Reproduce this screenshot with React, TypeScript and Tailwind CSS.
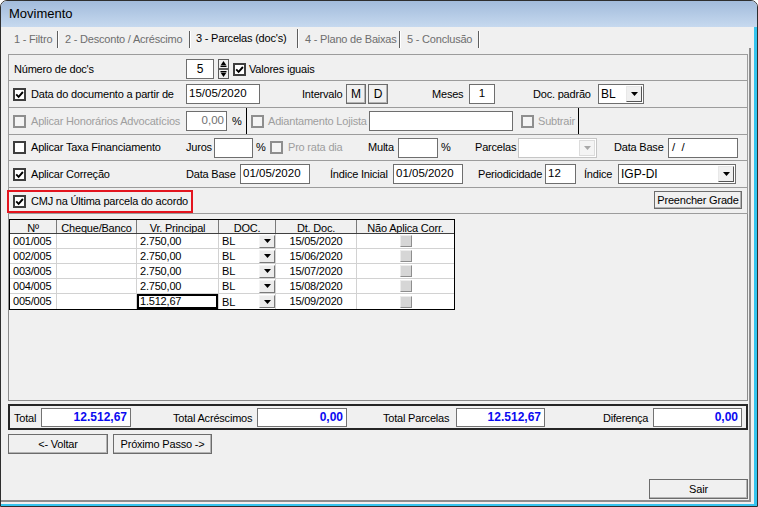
import React from 'react';

type Cls = { className?: string; children?: React.ReactNode };

const Check = ({ checked = false, disabled = false }: { checked?: boolean; disabled?: boolean }) => (
  <span
    className={`w-[13px] h-[13px] shrink-0 border-2 flex items-center justify-center ${
      disabled ? 'border-[#8e8e8e] bg-[#f4f4f4]' : 'border-[#3e3e3e] bg-white'
    }`}
  >
    {checked && (
      <svg width="9" height="9" viewBox="0 0 9 9">
        <path d="M1.2 4.4 L3.6 6.8 L7.9 2" fill="none" stroke="#000" strokeWidth="1.9" />
      </svg>
    )}
  </span>
);

const Field = ({ className = '', children }: Cls) => (
  <div
    className={`h-[20px] shrink-0 bg-white border border-[#6e6e6e] flex items-center text-[11.5px] tracking-normal leading-none whitespace-pre ${className}`}
  >
    {children}
  </div>
);

const Btn = ({ className = '', children }: Cls) => (
  <div
    className={`shrink-0 flex items-center justify-center bg-[#f0f0f0] border border-[#6c6c6c] shadow-[inset_-1px_-1px_0_#b4b4b4] ${className}`}
  >
    {children}
  </div>
);

const Arrow = ({ color = '#000' }: { color?: string }) => (
  <svg width="7" height="4" viewBox="0 0 7 4">
    <path d="M0 0H7L3.5 4Z" fill={color} />
  </svg>
);

const Combo = ({ className = '', value = '', disabled = false }: { className?: string; value?: string; disabled?: boolean }) => (
  <div
    className={`h-[20px] shrink-0 flex items-center bg-white border pl-[2px] pr-[1px] ${
      disabled ? 'border-[#c6c6c6]' : 'border-[#6e6e6e]'
    } ${className}`}
  >
    <span className="flex-1 text-[12px] tracking-normal">{value}</span>
    <span
      className={`w-[16px] h-[16px] flex items-center justify-center border ${
        disabled
          ? 'bg-[#f4f4f4] border-[#dcdcdc]'
          : 'bg-[#f0f0f0] border-[#e8e8e8] border-r-[#555] border-b-[#555]'
      }`}
    >
      <Arrow color={disabled ? '#a8a8a8' : '#000'} />
    </span>
  </div>
);

const Spinner = ({ className = '' }: { className?: string }) => (
  <svg className={`shrink-0 ${className}`} width="11" height="20" viewBox="0 0 11 20">
    <rect x="0.5" y="0.5" width="10" height="9" fill="#f0f0f0" stroke="#5c5c5c" />
    <rect x="0.5" y="10.5" width="10" height="9" fill="#f0f0f0" stroke="#5c5c5c" />
    <path d="M2.5 6.5 L5.5 2 L8.5 6.5Z" fill="#000" />
    <path d="M2.5 7.5 H8.5" stroke="#000" />
    <path d="M2.5 13.5 L5.5 18 L8.5 13.5Z" fill="#000" />
    <path d="M2.5 12.5 H8.5" stroke="#000" />
  </svg>
);

const Tab = ({ className = '', children, active = false }: Cls & { active?: boolean }) => (
  <div
    className={`shrink-0 border-r border-[#5e5e5e] shadow-[1px_0_0_#ffffff] whitespace-nowrap ${
      active ? 'h-[19px] leading-[19px] text-black' : 'h-[17px] leading-[17px] text-[#6e6e6e]'
    } ${className}`}
  >
    {children}
  </div>
);

const cols = ['w-[47px]', 'w-[80px]', 'w-[82px]', 'w-[57px]', 'w-[81px]', 'w-[97px]'];

const rows = [
  { n: '001/005', v: '2.750,00', d: '15/05/2020' },
  { n: '002/005', v: '2.750,00', d: '15/06/2020' },
  { n: '003/005', v: '2.750,00', d: '15/07/2020' },
  { n: '004/005', v: '2.750,00', d: '15/08/2020' },
  { n: '005/005', v: '1.512,67', d: '15/09/2020' },
];

const TotalField = ({ className = '', children }: Cls) => (
  <div
    className={`h-[19px] shrink-0 bg-white border border-[#737373] flex justify-end pr-[3px] font-bold text-[12px] leading-[16px] tracking-normal text-[#0a0af0] ${className}`}
  >
    {children}
  </div>
);

const gray = 'text-[#9e9e9e]';

export default function App() {
  return (
    <div className="w-[758px] h-[507px] bg-white font-['Liberation_Sans',Arial,sans-serif] text-[11px] tracking-[-0.2px] text-black">
      <div className="w-full h-full border border-[#2e2e2e] rounded-t-[7px] overflow-hidden flex flex-col bg-[#f0f0f0]">
        {/* title bar */}
        <div className="h-[26px] shrink-0 bg-gradient-to-b from-[#a2bbdb] to-[#c6d9ef] pl-[8px] flex items-center text-[13px] tracking-normal">
          Movimento
        </div>

        <div className="flex-1 flex flex-col border-r-[3px] border-b-[2px] border-[#35c4ee] pb-[2px]">
          {/* tabs */}
          <div className="h-[21px] shrink-0 flex items-end pl-[7px]">
            <Tab className="w-[50px] pl-[6px]">1 - Filtro</Tab>
            <Tab className="w-[132px] pl-[7px]">2 - Desconto / Acréscimo</Tab>
            <Tab className="w-[108px] pl-[6px]" active>
              3 - Parcelas (doc's)
            </Tab>
            <Tab className="w-[102px] pl-[7px]">4 - Plano de Baixas</Tab>
            <Tab className="w-[79px] pl-[7px]">5 - Conclusão</Tab>
          </div>

          {/* tab page */}
          <div className="flex-1 flex flex-col mr-[3px] border-r-2 border-b-2 border-[#8d8d8d] pl-[7px] pt-[6px]">
            {/* options */}
            <div className="w-[740px] shrink-0 border border-[#9c9c9c] flex flex-col">
              <div className="h-[26px] border-b border-[#9c9c9c] flex items-center pt-[3px]">
                <div className="w-[177px] pl-[5px] shrink-0">Número de doc's</div>
                <Field className="w-[28px] justify-center text-[12px]">5</Field>
                <Spinner className="ml-[4px]" />
                <div className="ml-[4px]">
                  <Check checked />
                </div>
                <span className="ml-[3px]">Valores iguais</span>
              </div>

              <div className="h-[27px] border-b border-[#9c9c9c] flex items-center">
                <div className="w-[177px] pl-[4px] shrink-0 flex items-center">
                  <Check checked />
                  <span className="ml-[5px] whitespace-nowrap">Data do documento a partir de</span>
                </div>
                <Field className="w-[74px] pl-[2px]">15/05/2020</Field>
                <span className="ml-[42px] w-[44px] shrink-0">Intervalo</span>
                <Btn className="w-[20px] h-[20px] text-[12px]">M</Btn>
                <Btn className="ml-[2px] w-[20px] h-[20px] text-[12px]">D</Btn>
                <span className="ml-[44px] w-[37px] shrink-0">Meses</span>
                <Field className="w-[26px] justify-center">1</Field>
                <span className="ml-[38px] w-[65px] shrink-0">Doc. padrão</span>
                <Combo className="w-[46px]" value="BL" />
              </div>

              <div className="h-[27px] border-b border-[#9c9c9c] flex items-center">
                <div className={`w-[177px] pl-[4px] shrink-0 flex items-center ${gray}`}>
                  <Check disabled />
                  <span className="ml-[5px] whitespace-nowrap">Aplicar Honorários Advocatícios</span>
                </div>
                <Field className="w-[41px] justify-end pr-[2px] text-[#707070]">0,00</Field>
                <span className="w-[19px] pl-[5px] shrink-0">%</span>
                <div className="w-px self-stretch bg-black shrink-0" />
                <div className={`w-[122px] pl-[4px] shrink-0 flex items-center ${gray}`}>
                  <Check disabled />
                  <span className="ml-[4px] whitespace-nowrap">Adiantamento Lojista</span>
                </div>
                <Field className="w-[144px]" />
                <div className={`w-[65px] pl-[8px] shrink-0 flex items-center ${gray}`}>
                  <Check disabled />
                  <span className="ml-[4px]">Subtrair</span>
                </div>
                <div className="w-px self-stretch bg-black shrink-0" />
              </div>

              <div className="h-[26px] border-b border-[#9c9c9c] flex items-center">
                <div className="w-[177px] pl-[4px] shrink-0 flex items-center">
                  <Check />
                  <span className="ml-[5px] whitespace-nowrap">Aplicar Taxa Financiamento</span>
                </div>
                <span className="w-[28px] shrink-0">Juros</span>
                <Field className="w-[39px]" />
                <span className="w-[17px] pl-[3px] shrink-0">%</span>
                <div className={`w-[98px] shrink-0 flex items-center ${gray}`}>
                  <Check disabled />
                  <span className="ml-[5px]">Pro rata dia</span>
                </div>
                <span className="w-[30px] shrink-0">Multa</span>
                <Field className="w-[40px]" />
                <span className="w-[37px] pl-[3px] shrink-0">%</span>
                <span className="w-[43px] shrink-0">Parcelas</span>
                <Combo className="w-[79px]" disabled />
                <span className="ml-[17px] w-[54px] shrink-0">Data Base</span>
                <Field className="w-[70px] pl-[3px]">{'/  /'}</Field>
              </div>

              <div className="h-[27px] border-b border-[#9c9c9c] flex items-center">
                <div className="w-[177px] pl-[4px] shrink-0 flex items-center">
                  <Check checked />
                  <span className="ml-[5px]">Aplicar Correção</span>
                </div>
                <span className="w-[54px] shrink-0">Data Base</span>
                <Field className="w-[70px] pl-[2px]">01/05/2020</Field>
                <span className="ml-[20px] w-[63px] shrink-0">Índice Inicial</span>
                <Field className="w-[70px] pl-[2px]">01/05/2020</Field>
                <span className="ml-[15px] w-[67px] shrink-0">Periodicidade</span>
                <Field className="w-[31px] pl-[2px]">12</Field>
                <span className="ml-[8px] w-[34px] shrink-0">Índice</span>
                <Combo className="w-[118px]" value="IGP-DI" />
              </div>

              <div className="h-[25px] flex items-start pt-[2px]">
                <div className="-ml-[2px] h-[23px] w-[186px] border-2 border-[#e3151f] flex items-center pl-[4px]">
                  <Check checked />
                  <span className="ml-[5px] whitespace-nowrap">CMJ na Última parcela do acordo</span>
                </div>
                <Btn className="ml-auto mr-[5px] mt-[1px] w-[88px] h-[18px]">Preencher Grade</Btn>
              </div>
            </div>

            {/* grid */}
            <div className="w-[740px] h-[187px] shrink-0 border-x border-b border-[#8c8c8c] pt-[5px]">
              <div className="w-[446px] border border-black bg-white">
                <div className="flex h-[14px] bg-[#f0f0f0] border-b border-[#404040]">
                  {['Nº', 'Cheque/Banco', 'Vr. Principal', 'DOC.', 'Dt. Doc.', 'Não Aplica Corr.'].map((h, i) => (
                    <div
                      key={h}
                      className={`${cols[i]} h-[13px] overflow-hidden text-center leading-[17px] ${
                        i < 5 ? 'border-r border-[#7a7a7a]' : ''
                      }`}
                    >
                      {h}
                    </div>
                  ))}
                </div>
                {rows.map((r, ri) => (
                  <div key={r.n} className={`flex h-[15px] ${ri < 4 ? 'border-b border-[#d2d2d2]' : ''}`}>
                    <div className={`${cols[0]} border-r border-[#d2d2d2] pl-[3px] leading-[14px]`}>{r.n}</div>
                    <div className={`${cols[1]} border-r border-[#d2d2d2]`} />
                    <div
                      className={`${cols[2]} border-r border-[#d2d2d2] pl-[3px] leading-[14px] ${
                        ri === 4 ? 'ring-2 ring-inset ring-black' : ''
                      }`}
                    >
                      {r.v}
                    </div>
                    <div className={`${cols[3]} border-r border-[#d2d2d2] pl-[3px] flex items-center`}>
                      <span className="flex-1 leading-[14px]">BL</span>
                      <span className="w-[16px] h-[13px] flex items-center justify-center bg-[#ececec] border border-[#f4f4f4] border-r-[#7a7a7a] border-b-[#7a7a7a]">
                        <Arrow />
                      </span>
                    </div>
                    <div className={`${cols[4]} border-r border-[#d2d2d2] text-center leading-[14px]`}>{r.d}</div>
                    <div className={`${cols[5]} flex items-center justify-center`}>
                      <span className="w-[12px] h-[12px] bg-[#d6d6d6] border border-[#ececec] border-r-[#8e8e8e] border-b-[#8e8e8e]" />
                    </div>
                  </div>
                ))}
              </div>
            </div>

            {/* totals */}
            <div className="mt-[3px] w-[740px] h-[26px] shrink-0 border-2 border-[#262626] flex items-center pl-[4px]">
              <span className="w-[27px] shrink-0 mt-[3px]">Total</span>
              <TotalField className="w-[90px]">12.512,67</TotalField>
              <span className="ml-[42px] w-[84px] shrink-0 mt-[3px]">Total Acréscimos</span>
              <TotalField className="w-[90px]">0,00</TotalField>
              <span className="ml-[36px] w-[73px] shrink-0 mt-[3px]">Total Parcelas</span>
              <TotalField className="w-[89px]">12.512,67</TotalField>
              <span className="ml-[58px] w-[50px] shrink-0 mt-[3px]">Diferença</span>
              <TotalField className="w-[89px]">0,00</TotalField>
            </div>

            {/* navigation */}
            <div className="mt-[4px] flex shrink-0">
              <Btn className="w-[100px] h-[20px]">{'<- Voltar'}</Btn>
              <Btn className="ml-[5px] w-[99px] h-[20px]">{'Próximo Passo ->'}</Btn>
            </div>
            <div className="flex-1" />
            <div className="w-[740px] flex justify-end mb-[1px] shrink-0">
              <Btn className="w-[99px] h-[20px]">Sair</Btn>
            </div>
          </div>
        </div>
      </div>
    </div>
  );
}
